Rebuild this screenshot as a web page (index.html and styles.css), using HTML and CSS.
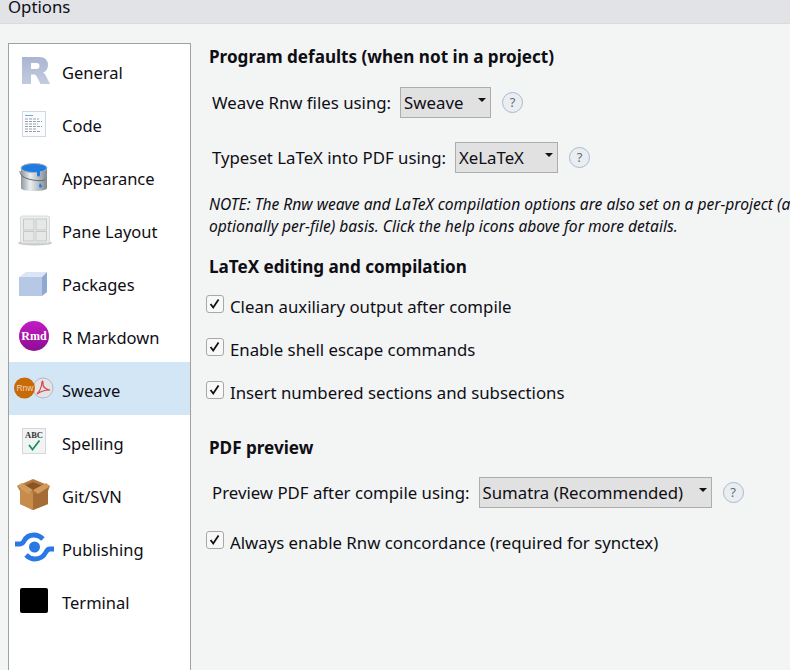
FILE: index.html
```html
<!DOCTYPE html>
<html lang="en">
<head>
<meta charset="utf-8">
<title>Options</title>
<link rel="stylesheet" href="styles.css">
</head>
<body>
<header class="titlebar"><span class="title">Options</span></header>
<div class="main">
  <nav class="sidebar">
    <div class="item">
      <svg class="icon" viewBox="0 0 36 36"><defs><linearGradient id="rg" x1="0" y1="0" x2="0" y2="1"><stop offset="0" stop-color="#a9b6d3"/><stop offset="1" stop-color="#c3cbdc"/></linearGradient></defs><path fill="url(#rg)" fill-rule="evenodd" d="M6 5h17c6 0 9 3.500 9 8 0 4-2 6.500-5 7.500 1.500.8 2.300 2 3.300 4L34 32h-9.500l-3.500-7c-1-2-2-2.500-3.500-2.500H15V32H6zM15 11v6h5.500c2 0 3-1.200 3-3s-1-3-3-3z"/></svg>
      <span>General</span>
    </div>
    <div class="item">
      <svg class="icon" viewBox="0 0 36 36"><rect x="6.500" y="6.500" width="23" height="25" fill="#fbfcfd" stroke="#d3d8de"/><path d="M9 10.500h8" stroke="#5eb3e0"/><path d="M9 14h14M9 16.500h17M9 19h13M9 21.500h17M9 24h12M9 26.500h16" stroke="#9a9fa6" stroke-dasharray="3 1"/></svg>
      <span>Code</span>
    </div>
    <div class="item">
      <svg class="icon" viewBox="0 0 36 36"><defs><linearGradient id="cn" x1="0" y1="0" x2="1" y2="0"><stop offset="0" stop-color="#8f979e"/><stop offset=".35" stop-color="#eceff1"/><stop offset="1" stop-color="#7f888f"/></linearGradient></defs><path fill="url(#cn)" d="M5 10v20c0 2 5 3 13 3s13-1 13-3V10z"/><ellipse cx="18" cy="10" rx="13" ry="4.500" fill="#1e7ce0" stroke="#aab1b6"/><path fill="#1e7ce0" d="M21 12h3v5c0 2-3 2-3 0zM24 25l2 3c0 2-3 2-3 0z"/><path d="M4 13c0 4 3 6 7 7.500s15 3.500 18 1" fill="none" stroke="#5f686f"/></svg>
      <span>Appearance</span>
    </div>
    <div class="item">
      <svg class="icon" viewBox="0 0 36 36"><ellipse cx="19" cy="32" rx="17" ry="2.500" fill="#c8cbcc"/><rect x="4.500" y="5" width="29" height="27" rx="2" fill="#eceeee" stroke="#d8dada"/><rect x="7.500" y="8" width="10.500" height="11" fill="#e6e8e8" stroke="#c6c9c9"/><rect x="20" y="8" width="10.500" height="11" fill="#e6e8e8" stroke="#c6c9c9"/><rect x="7.500" y="20.500" width="10.500" height="9.500" fill="#e6e8e8" stroke="#c6c9c9"/><rect x="20" y="20.500" width="10.500" height="9.500" fill="#e6e8e8" stroke="#c6c9c9"/></svg>
      <span>Pane Layout</span>
    </div>
    <div class="item">
      <svg class="icon" viewBox="0 0 36 36"><path fill="#dbe5f3" d="M3 13l7-5h21l-5 5z"/><path fill="#b5c9e6" d="M3 13h23v19H3z"/><path fill="#8fa9d0" d="M26 13l5-5v20l-5 4z"/></svg>
      <span>Packages</span>
    </div>
    <div class="item">
      <svg class="icon" viewBox="0 0 36 36"><defs><linearGradient id="md" x1="0" y1="0" x2="0" y2="1"><stop offset="0" stop-color="#c21dc4"/><stop offset="1" stop-color="#8c0d91"/></linearGradient></defs><circle cx="18" cy="19" r="15" fill="url(#md)"/><text x="18" y="23" class="rmd">Rmd</text></svg>
      <span>R Markdown</span>
    </div>
    <div class="item selected">
      <svg class="icon wide" viewBox="0 0 42 24"><circle cx="29" cy="12" r="10" fill="#e4e4e8" stroke="#b5b8be"/><path d="M23 18c3-3 4.500-7 5-12 .3-1.500 1.300-1 1 1-.5 4 1.500 6 7 7-5 0-9 1-13 4z" fill="none" stroke="#d9454a" stroke-width="1.200"/><circle cx="10.500" cy="12" r="10.500" fill="#c96a08"/><text x="11" y="15" class="rnw">Rnw</text></svg>
      <span>Sweave</span>
    </div>
    <div class="item">
      <svg class="icon" viewBox="0 0 36 36"><rect x="6.500" y="5.500" width="23" height="25" fill="#f1f3f5" stroke="#d3d8de"/><text x="18" y="15" class="abc">ABC</text><path d="M13 22l3.500 4.500 7-9" fill="none" stroke="#16945c" stroke-width="1.800"/></svg>
      <span>Spelling</span>
    </div>
    <div class="item">
      <svg class="icon" viewBox="0 0 36 36"><path fill="#b47a3f" d="M1 10L17 3l17 7-2 5v13l-15 6-13-6V15z"/><path fill="#8a5526" d="M8 10l9-4 10 4-10 5z"/><path fill="#c78b4c" d="M4 12l13 5v17L4 28z"/><path fill="#a66c35" d="M17 17l15-5v16l-15 6z"/><path fill="#d29b5e" d="M1 10l5-3 11 7-5 4zM34 10l-4-3-13 7 5 4z"/></svg>
      <span>Git/SVN</span>
    </div>
    <div class="item">
      <svg class="icon wide pub" viewBox="0 0 40 30"><g fill="none" stroke="#2a78e4" stroke-width="4.800"><path d="M0 12h5c2 0 3-1 4-3 2-4 5-6 10-6 4 0 7 2 9 4"/><path d="M39 17h-4c-2 0-3 1-4 3-2 4-5 7-11 7-4 0-7-2-9-4"/></g><circle cx="19.500" cy="15" r="5.500" fill="#2a78e4"/></svg>
      <span>Publishing</span>
    </div>
    <div class="item">
      <svg class="icon" viewBox="0 0 36 36"><rect x="4" y="6" width="28" height="25" rx="2" fill="#000"/></svg>
      <span>Terminal</span>
    </div>
  </nav>
  <section class="pane">
    <h2 class="heading first">Program defaults (when not in a project)</h2>
    <div class="field weave">
      <label class="field-label">Weave Rnw files using:</label>
      <div class="select s-weave"><span>Sweave</span><i class="caret"></i></div>
      <span class="help">?</span>
    </div>
    <div class="field typeset">
      <label class="field-label">Typeset LaTeX into PDF using:</label>
      <div class="select s-tex"><span>XeLaTeX</span><i class="caret"></i></div>
      <span class="help">?</span>
    </div>
    <p class="note">NOTE: The Rnw weave and LaTeX compilation options are also set on a per-project (and<br>optionally per-file) basis. Click the help icons above for more details.</p>
    <h2 class="heading second">LaTeX editing and compilation</h2>
    <div class="check"><i class="box"><svg viewBox="0 0 18 18"><path d="M4 9l3 4 6-9" fill="none" stroke="#111" stroke-width="2"/></svg></i><span>Clean auxiliary output after compile</span></div>
    <div class="check"><i class="box"><svg viewBox="0 0 18 18"><path d="M4 9l3 4 6-9" fill="none" stroke="#111" stroke-width="2"/></svg></i><span>Enable shell escape commands</span></div>
    <div class="check"><i class="box"><svg viewBox="0 0 18 18"><path d="M4 9l3 4 6-9" fill="none" stroke="#111" stroke-width="2"/></svg></i><span>Insert numbered sections and subsections</span></div>
    <h2 class="heading third">PDF preview</h2>
    <div class="field preview">
      <label class="field-label">Preview PDF after compile using:</label>
      <div class="select s-pdf"><span>Sumatra (Recommended)</span><i class="caret"></i></div>
      <span class="help">?</span>
    </div>
    <div class="check last"><i class="box"><svg viewBox="0 0 18 18"><path d="M4 9l3 4 6-9" fill="none" stroke="#111" stroke-width="2"/></svg></i><span>Always enable Rnw concordance (required for synctex)</span></div>
  </section>
</div>
</body>
</html>
```
FILE: styles.css
```css
html, body {
  margin: 0;
  height: 100%;
  overflow: hidden;
}
body {
  background: #f3f4f4;
  color: #0e0e14;
  font-family: "Noto Sans", "Open Sans", sans-serif;
  font-size: 16.800px;
  display: flex;
  flex-direction: column;
  width: 790px;
  height: 670px;
}
.titlebar {
  height: 24px;
  flex: none;
  background: #e1e3e7;
  border-bottom: 1px solid #d9dbde;
  box-sizing: border-box;
  padding-left: 8px;
  line-height: 14px;
}
.main {
  flex: 1;
  display: flex;
  padding: 19px 0 0 8px;
  min-height: 0;
}
.sidebar {
  width: 183px;
  flex: none;
  background: #fff;
  border: 1px solid #a0a0a0;
  border-bottom: 0;
  box-sizing: border-box;
  font-size: 16.500px;
}
.item {
  height: 53px;
  display: flex;
  align-items: center;
  padding: 4px 0 0 53px;
  box-sizing: border-box;
  position: relative;
}
.item.selected {
  background: #d3e6f6;
}
.icon {
  position: absolute;
  left: 7px;
  top: 8px;
  width: 36px;
  height: 36px;
}
.icon.wide {
  left: 5px;
  top: 14px;
  width: 42px;
  height: 24px;
}
.icon.pub {
  left: 6px;
  top: 11px;
  height: 30px;
  width: 40px;
}
.rmd {
  font-family: "Liberation Serif", serif;
  font-weight: 700;
  font-size: 12px;
  fill: #fff;
  text-anchor: middle;
}
.rnw {
  font-family: "Liberation Sans", sans-serif;
  font-size: 8.500px;
  fill: #f3d9b8;
  text-anchor: middle;
}
.abc {
  font-family: "Liberation Serif", serif;
  font-weight: 700;
  font-size: 8.500px;
  fill: #333;
  text-anchor: middle;
}
.pane {
  flex: 1;
  min-width: 0;
  padding: 0 0 0 18px;
  overflow: hidden;
}
.heading {
  font-size: 17.100px;
  font-weight: 700;
  line-height: 24px;
  margin: 0;
  white-space: nowrap;
}
.heading.first { margin-top: 2px; }
.heading.second { margin-top: 18px; }
.heading.third { margin-top: 32px; }
.field {
  display: flex;
  align-items: center;
  white-space: nowrap;
  padding-left: 3px;
  height: 32px;
}
.field.weave { margin-top: 17px; }
.field.typeset { margin-top: 23px; }
.field.preview { margin-top: 16px; }
.field-label {
  margin-right: 9px;
}
.select {
  height: 31px;
  box-sizing: border-box;
  background: #e1e1e1;
  border: 1px solid #adadad;
  display: flex;
  align-items: center;
  justify-content: space-between;
  padding: 0 4px 0 3px;
}
.s-weave { width: 91px; }
.s-tex { width: 103px; }
.s-pdf { width: 233px; }
.caret {
  width: 0;
  height: 0;
  border: 4px solid transparent;
  border-top: 4px solid #111;
  border-bottom: 0;
  transform: translateY(-2px);
}
.help {
  width: 19px;
  height: 19px;
  margin-left: 11px;
  border: 1px solid #a9bac9;
  border-radius: 50%;
  background: #e9eef2;
  color: #6a6a6a;
  font-size: 13px;
  line-height: 19px;
  text-align: center;
  flex: none;
}
.note {
  margin: 20px 0 0;
  font-size: 15.600px;
  font-style: italic;
  line-height: 22px;
  white-space: nowrap;
}
.check {
  display: flex;
  align-items: center;
  height: 24px;
  margin-top: 19px;
  white-space: nowrap;
}
.heading.second + .check { margin-top: 15px; }
.check.last { margin-top: 22px; }
.box {
  width: 16px;
  height: 16px;
  margin: 0 6px 0 -3px;
  flex: none;
  background: #f8f8f8;
  border: 1px solid #a8a8a8;
  border-radius: 3px;
  transform: translateY(-2px);
}
.box svg {
  display: block;
  width: 16px;
  height: 16px;
}
```
